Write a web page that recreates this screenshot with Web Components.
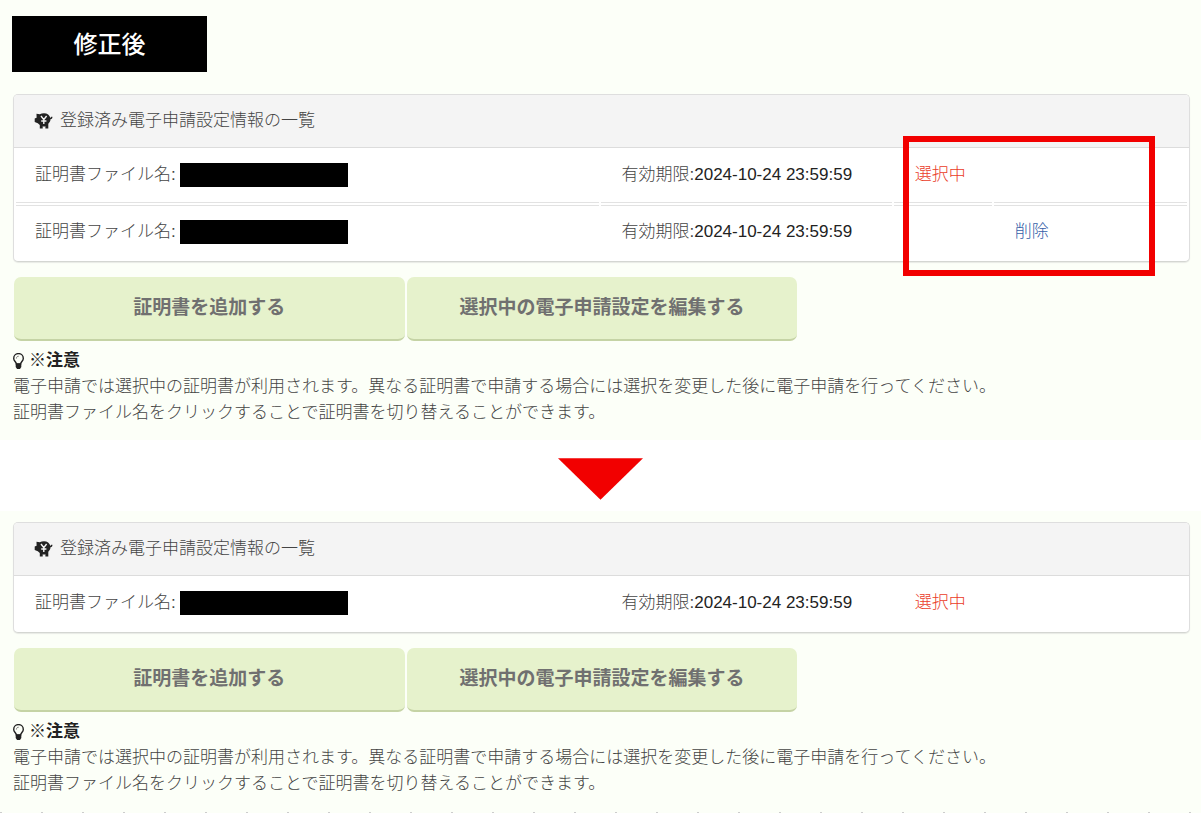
<!DOCTYPE html>
<html lang="ja">
<head>
<meta charset="utf-8">
<meta name="viewport" content="width=device-width">
<title>電子申請設定情報</title>
<style>
body { margin: 0; background: #fff; color: #444; font: 300 17px/26px "Liberation Sans", "Noto Sans CJK JP", sans-serif; }
</style>
</head>
<body>
<settings-screen>
  <title-badge slot="badge">修正後</title-badge>
  <cert-list>
    <cert-entry expires="2024-10-24 23:59:59" selected></cert-entry>
    <cert-entry expires="2024-10-24 23:59:59" removable></cert-entry>
    <focus-frame slot="mark"></focus-frame>
  </cert-list>
  <action-bar></action-bar>
  <notice-text></notice-text>
</settings-screen>
<step-arrow></step-arrow>
<settings-screen>
  <cert-list>
    <cert-entry expires="2024-10-24 23:59:59" selected></cert-entry>
  </cert-list>
  <action-bar></action-bar>
  <notice-text></notice-text>
</settings-screen>
<edge-ticks></edge-ticks>

<script>
function define(name, html, setup) {
  const template = document.createElement('template');
  template.innerHTML = html;
  customElements.define(name, class extends HTMLElement {
    constructor() {
      super();
      this.attachShadow({ mode: 'open' }).append(template.content.cloneNode(true));
    }
    connectedCallback() { if (setup && !this.ready) { this.ready = true; setup(this); } }
  });
}

define('settings-screen', `
<style>
  :host { display: block; background: #fcfff8; padding: 11px 11px 14px 13px; }
  ::slotted([slot=badge]) { margin: 5px 0 22px -1px; }
</style>
<slot name="badge"></slot><slot></slot>`);

define('title-badge', `
<style>
  :host { display: block; }
  strong { display: block; box-sizing: border-box; width: 195px; padding: 9px 10px 11px; background: #000; color: #fff;
    font: 500 24px/36px "Noto Sans CJK JP", sans-serif; text-align: center; }
</style>
<strong><slot></slot></strong>`);

define('cert-list', `
<style>
  :host { display: block; position: relative; }
  section { border: 1px solid #dedede; border-bottom-color: #d4d6d2; border-radius: 5px; background: #fff;
    box-shadow: 0 1px 1px #e8eae5; }
  h2 { display: flex; align-items: center; gap: 7px; margin: 0; padding: 13px 20px; font: inherit;
    background: #f4f4f4; border-bottom: 1px solid #dcdcdc; border-radius: 4px 4px 0 0; }
  svg { width: 19px; height: 17px; flex: none; }
  table { width: 100%; table-layout: fixed; border-collapse: separate; border-spacing: 2px; }
  th, td { box-sizing: border-box; padding: 12px 21px 14px; font-weight: inherit; text-align: left; white-space: nowrap; }
  th { width: 50%; padding-left: 19px; }
  td.date { width: 25%; }
  td.state { width: 98px; color: #ea3c28; }
  tr:not(:last-child) > * { border-bottom: 1px solid #e2e2e2; }
  tr + tr > * { border-top: 1px solid #e2e2e2; padding-top: 13px; }
  th span { display: flex; align-items: center; }
  i { width: 168px; height: 24px; margin-left: 4px; background: #000; }
  b { font-weight: 400; color: #222; }
  a { color: #3560a8; text-decoration: none; }
</style>
<section>
  <h2>
    <svg viewBox="0 0 19 17" aria-hidden="true">
      <path fill="#222" d="M2.500.8 5.800 1.300C7 .6 8.400.3 10 .3c3.300 0 5.600 1.900 6.300 4.400.6 0 .9-.3.9-1h1.200c.2 1.500-.6 2.500-1.900 2.600-.1 2-1 3.400-2.200 4.500V15.400h-2.900v-2.200c-1 .3-1.700.3-2.700 0v2.200H5.800v-3.500L3.800 10.300.7 9.100V5.600l1.900-.9z"/>
      <path fill="none" stroke="#f4f4f4" stroke-width="1.400" d="m7 3 2.800 3.700L12.600 3M9.800 6.700v4.200M7.200 8h5.200"/>
    </svg>
    <span>登録済み電子申請設定情報の一覧</span>
  </h2>
  <table><tbody></tbody></table>
</section>
<slot name="mark"></slot>`, host => {
  const body = host.shadowRoot.querySelector('tbody');
  for (const entry of host.querySelectorAll('cert-entry')) {
    const row = body.insertRow();
    row.innerHTML = `<th scope="row"><span>証明書ファイル名:<i></i></span></th>
      <td class="date">有効期限:<b>${entry.getAttribute('expires')}</b></td>
      <td class="state">${entry.hasAttribute('selected') ? '選択中' : ''}</td>
      <td>${entry.hasAttribute('removable') ? '<a href="#delete">削除</a>' : ''}</td>`;
  }
});

define('cert-entry', `<style>:host { display: none; }</style>`);

define('focus-frame', `
<style>
  :host { position: absolute; box-sizing: border-box; top: 42px; right: 35px; bottom: -14px; width: 252px;
    border: 6px solid #f20000; pointer-events: none; }
</style>`);

define('action-bar', `
<style>
  :host { display: grid; grid-template-columns: repeat(3, 1fr); gap: 2px; margin: 15px 0 7px 1px; }
  button { margin: 0; padding: 18px 10px; border: 0; border-bottom: 2px solid #c5d3a5; border-radius: 7px;
    background: #e6f2cc; color: #707070; font: inherit; font-size: 19px; font-weight: 700; white-space: nowrap; }
</style>
<button type="button">証明書を追加する</button>
<button type="button">選択中の電子申請設定を編集する</button>`);

define('notice-text', `
<style>
  :host { display: block; }
  h3, p { margin: 0; font: inherit; }
  h3 { display: flex; align-items: center; gap: 4px; color: #222; }
  svg { width: 12px; height: 17px; flex: none; }
  b { font-weight: 700; }
</style>
<h3>
  <svg viewBox="0 0 12 17" aria-hidden="true">
    <path fill="none" stroke="#222" stroke-width="1.400" d="M3.400 11C3.200 8.700.7 8.100.7 5.400a4.800 4.800 0 0 1 9.600 0c0 2.700-2.500 3.300-2.700 5.600z"/>
    <path fill="#222" d="M2.700 10.400h5.600v3.700L7 16.100H4.100l-1.400-2z"/>
    <path fill="none" stroke="#777" d="M3.400 5.500c0-1.500.9-2.300 2.300-2.300"/>
  </svg>
  <span>※<b>注意</b></span>
</h3>
<p>電子申請では選択中の証明書が利用されます。異なる証明書で申請する場合には選択を変更した後に電子申請を行ってください。</p>
<p>証明書ファイル名をクリックすることで証明書を切り替えることができます。</p>`);

define('step-arrow', `
<style>
  :host { display: flex; justify-content: center; padding: 18px 0 11px; }
  svg { width: 85px; height: 42px; }
</style>
<svg viewBox="0 0 86 42" aria-hidden="true"><path fill="#f20000" d="M0 0h86L43 42z"/></svg>`);

define('edge-ticks', `
<style>
  :host { display: block; padding-top: 1px; background: #fcfff8; }
  div { height: 1px; background: repeating-linear-gradient(90deg, #ccc 0 2px, #fcfff8 2px 41px); }
</style>
<div></div>`);
</script>
</body>
</html>
